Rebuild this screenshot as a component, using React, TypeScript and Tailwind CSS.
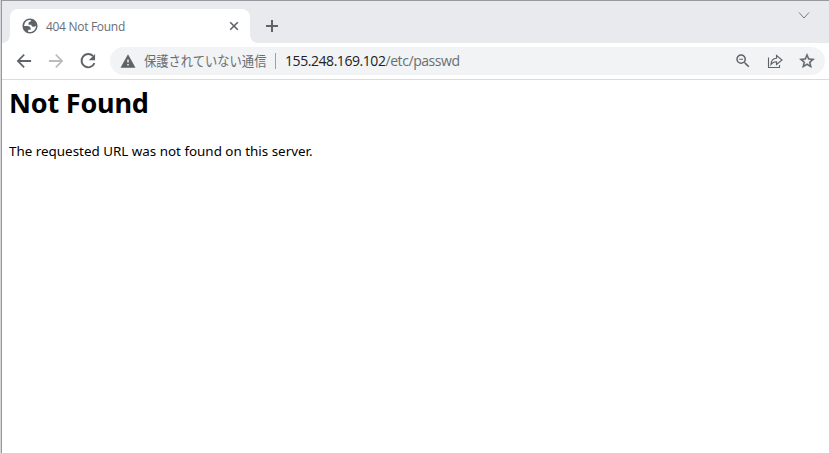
import React from "react";

function GlobeIcon() {
  return (
    <svg className="size-[18px] shrink-0" viewBox="0 0 24 24" fill="#5f6368">
      <path
        fillRule="evenodd"
        d="M12 2C6.48 2 2 6.48 2 12s4.48 10 10 10 10-4.48 10-10S17.52 2 12 2zM4 12h4.4c3.407.022 4.922 1.73 4.543 5.127H9.488v2.47a8.004 8.004 0 0 0 10.498-8.08C19.327 12.507 18.332 13 17 13c-2.137 0-3.206-.916-3.206-2.75h-3.748c-.274-2.728.683-4.092 2.87-4.092 0-.975.327-1.597.811-1.97A8.004 8.004 0 0 0 4 12z"
      />
    </svg>
  );
}

function Tab() {
  return (
    <div className="relative mt-2 flex h-[34px] w-[240px] items-center rounded-t-lg bg-white pl-[11px] pr-[9px]">
      <GlobeIcon />
      <span className="ml-[7px] mt-px whitespace-nowrap font-['Open_Sans','Noto_Sans',sans-serif] text-[12px] leading-4 tracking-[-0.3px] text-[#6a6d72]">
        404 Not Found
      </span>
      <svg className="ml-auto size-[14px]" viewBox="0 0 14 14" stroke="#5f6368" strokeWidth="1.6">
        <path d="M3.2 3.2l7.6 7.6M10.8 3.2l-7.6 7.6" />
      </svg>
      <svg className="absolute -left-2 bottom-0 size-2" viewBox="0 0 8 8" fill="#fff">
        <path d="M8 0v8H0a8 8 0 0 0 8-8z" />
      </svg>
      <svg className="absolute -right-2 bottom-0 size-2" viewBox="0 0 8 8" fill="#fff">
        <path d="M0 0v8h8a8 8 0 0 1-8-8z" />
      </svg>
    </div>
  );
}

function TabStrip() {
  return (
    <div className="flex h-[42px] bg-[#e8eaed] pl-2">
      <Tab />
      <svg className="ml-[14px] mt-[17px] size-4" viewBox="0 0 16 16" stroke="#5f6368" strokeWidth="2">
        <path d="M8 2v12M2 8h12" />
      </svg>
      <svg className="ml-auto mr-[18px] mt-[7px] h-4 w-[14px]" viewBox="0 0 14 16" fill="none" stroke="#77797c">
        <path d="M2 4.5l5 5.5 5-5.5" />
      </svg>
    </div>
  );
}

function AddressBar() {
  return (
    <div className="ml-[12px] flex h-7 w-[715px] items-center rounded-full bg-[#f1f3f4] pl-[9px] pr-[9px]">
      <svg className="size-[18px]" viewBox="0 0 24 24" fill="#5f6368">
        <path d="M2 21h20L12 3 2 21zm11-3h-2v-2h2v2zm0-4h-2v-4h2v4z" />
      </svg>
      <span className="mb-[2px] ml-[7px] w-[123px] origin-left scale-x-[0.877] whitespace-nowrap font-['Noto_Sans_CJK_JP',sans-serif] text-[14px] leading-5 text-[#6a6d72]">
        保護されていない通信
      </span>
      <span className="ml-2 h-4 w-px bg-[#9aa0a6]" />
      <span className="ml-[9px] whitespace-nowrap font-['Open_Sans','Noto_Sans',sans-serif] text-[14px] leading-5 tracking-[-0.44px] text-[#202124]">
        155.248.169.102<span className="text-[#6a6d72]">/etc/passwd</span>
      </span>
      <svg className="ml-auto size-[18px]" viewBox="0 0 24 24" fill="#5f6368">
        <path d="M15.5 14h-.79l-.28-.27A6.47 6.47 0 0 0 16 9.5 6.5 6.5 0 1 0 9.5 16c1.61 0 3.09-.59 4.23-1.57l.27.28v.79l5 4.99L20.49 19l-4.99-5zm-6 0C7.01 14 5 11.99 5 9.5S7.01 5 9.5 5 14 7.01 14 9.5 11.99 14 9.5 14zM7 9h5v1.200H7z" />
      </svg>
      <svg className="ml-[14px] size-[18px]" viewBox="0 0 18 18" fill="none" stroke="#5f6368" strokeWidth="1.1">
        <path d="M2.5 5.500v10h11V13M5 12.500c.2-4 2.200-6 5.500-6.200V3.500L16 8l-5.500 4.500V9.700C8 9.600 6.300 10.500 5 12.500z" />
      </svg>
      <svg className="ml-[14px] size-[18px]" viewBox="0 0 24 24" fill="#5f6368">
        <path d="M22 9.240l-7.190-.62L12 2 9.190 8.630 2 9.240l5.460 4.730L5.820 21 12 17.270 18.180 21l-1.630-7.030L22 9.240zM12 15.400l-3.760 2.270 1-4.280-3.320-2.880 4.380-.38L12 6.100l1.710 4.040 4.380.38-3.320 2.880 1 4.280L12 15.400z" stroke="#5f6368" strokeWidth="0.5" />
      </svg>
    </div>
  );
}

function Toolbar() {
  return (
    <div className="flex h-[37px] items-center border-b border-[#d9dbde] bg-white pl-3">
      <svg className="size-5" viewBox="0 0 24 24" fill="#5f6368">
        <path d="M20.500 10.800H7.300l5.600-5.600L11.500 3.700 3.200 12l8.300 8.300 1.400-1.500-5.600-5.600h13.200v-2.400z" />
      </svg>
      <svg className="ml-3 size-5" viewBox="0 0 24 24" fill="#babcbe">
        <path d="M3.500 10.800h13.200l-5.600-5.600 1.400-1.500 8.300 8.300-8.300 8.300-1.400-1.500 5.600-5.600H3.500v-2.400z" />
      </svg>
      <svg className="ml-3 size-5" viewBox="0 0 24 24" fill="none" stroke="#5f6368" strokeWidth="2.300">
        <path d="M18 6A8 8 0 1 0 19.700 14.600" />
        <path d="M20.500 3.500V11H13z" fill="#5f6368" stroke="none" />
      </svg>
      <AddressBar />
    </div>
  );
}

export default function App() {
  return (
    <div className="flex h-[453px] w-[829px] overflow-hidden bg-white">
      <div className="w-px shrink-0 bg-[#d5d6d8]" />
      <div className="min-w-0 flex-1 border-l border-t border-[#98989c]">
        <TabStrip />
        <Toolbar />
        <main className="pl-[7px] font-['Noto_Sans',sans-serif] text-black">
          <h1 className="mt-[5px] whitespace-nowrap text-[27px] font-bold leading-9 tracking-[-0.2px]">Not Found</h1>
          <p className="mt-[20px] whitespace-nowrap text-[13.4px] leading-5">
            The requested URL was not found on this server.
          </p>
        </main>
      </div>
    </div>
  );
}
